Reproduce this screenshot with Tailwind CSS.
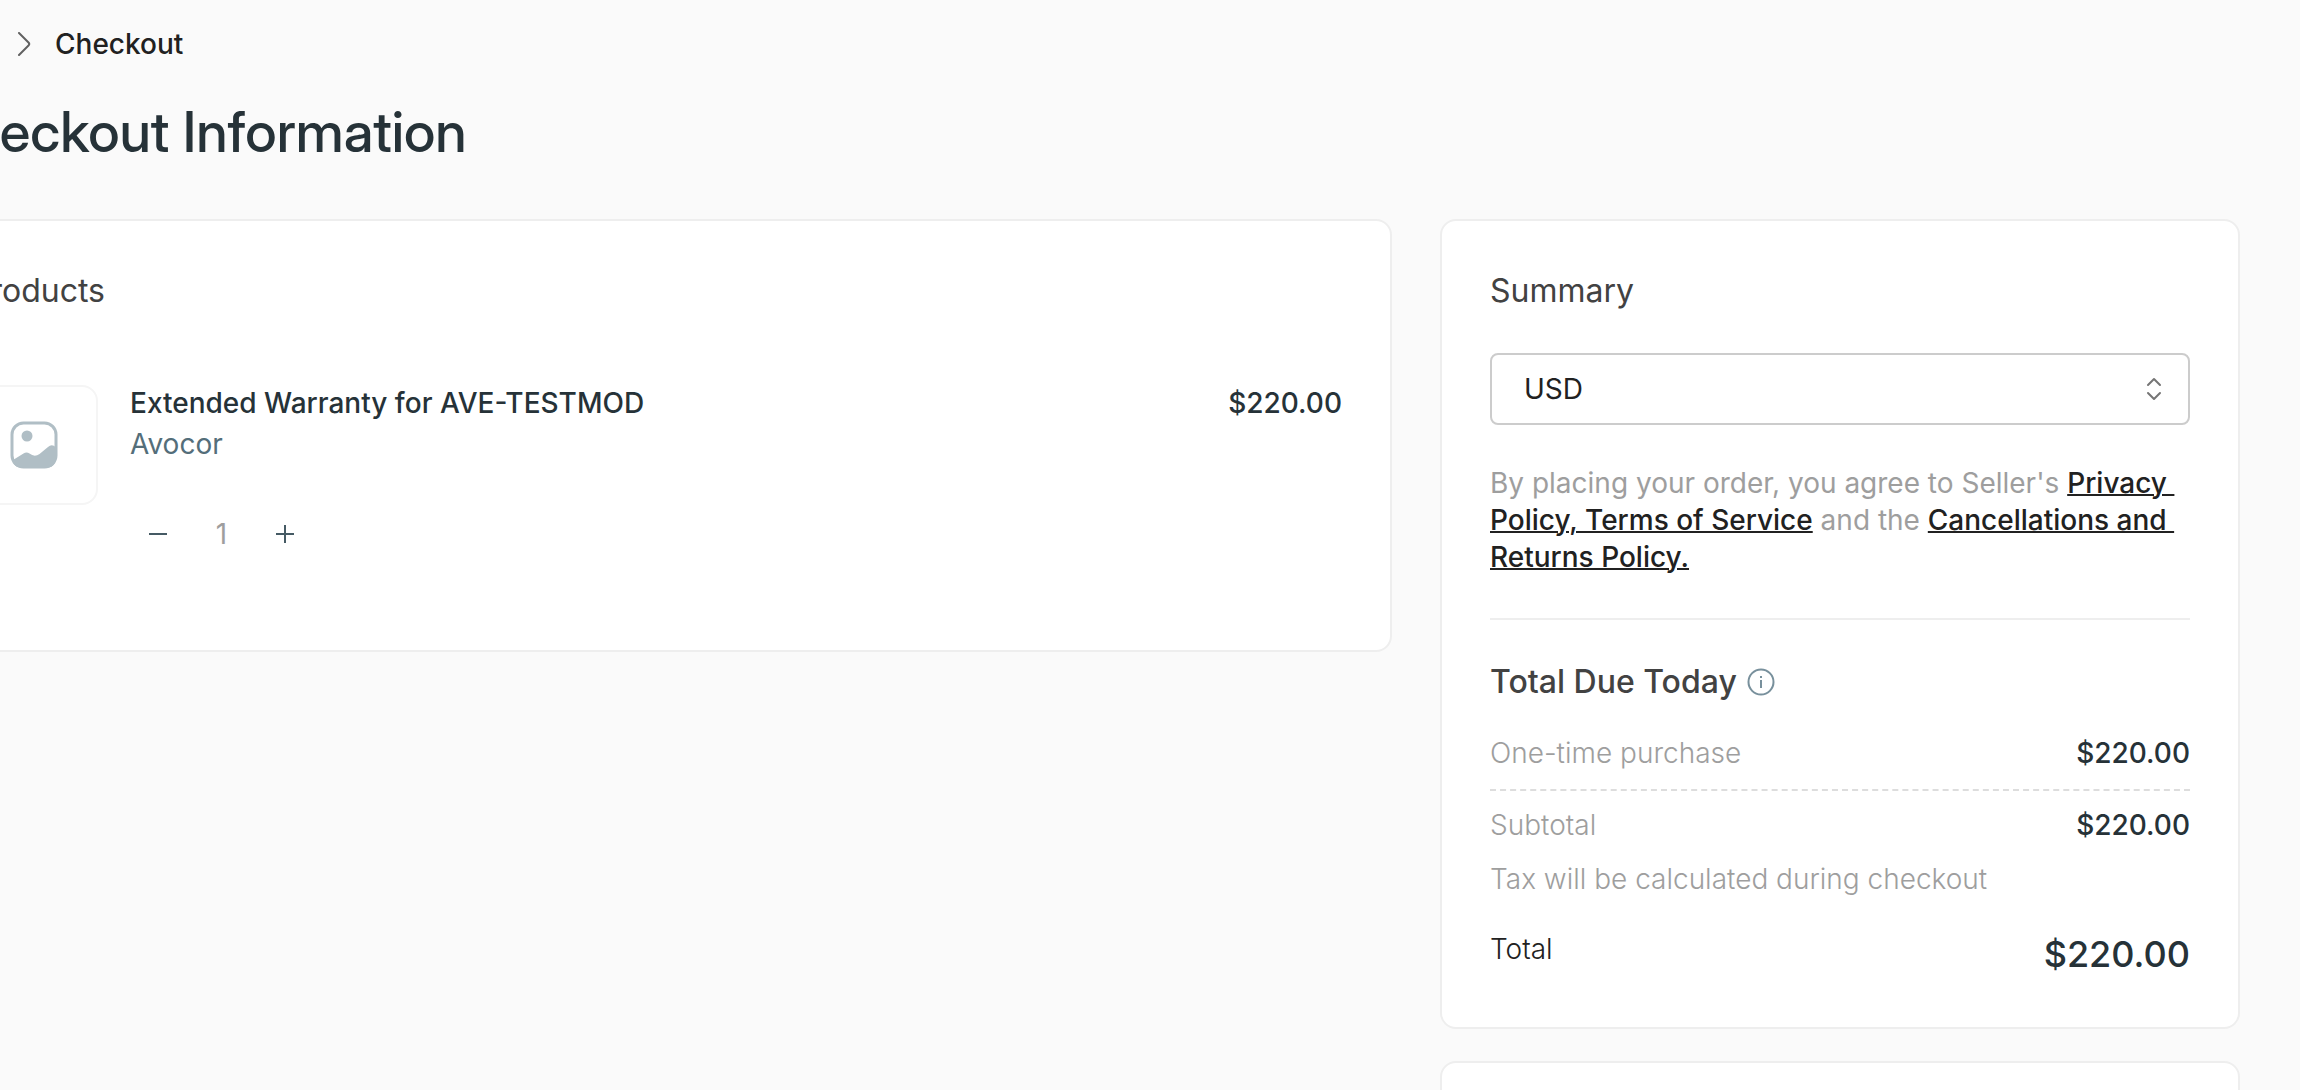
<!DOCTYPE html>
<html lang="en">
<head>
<meta charset="utf-8">
<meta name="viewport" content="width=device-width, initial-scale=1">
<title>Checkout</title>
<script src="https://cdn.jsdelivr.net/npm/@tailwindcss/browser@4"></script>
</head>
<body class="h-screen overflow-hidden bg-[#fafafa] font-['Inter',sans-serif] text-[28px] leading-10 text-[#263238]">
<div class="-ml-20 pt-6 pr-[60px]">
  <nav aria-label="Breadcrumb" class="flex items-center gap-6 pl-24 font-medium text-[#212121]">
    <svg class="h-6 w-[15px]" viewBox="0 0 15 24" fill="none" stroke="#616161" stroke-width="2" stroke-linecap="round" stroke-linejoin="round" aria-hidden="true"><path d="M3 1l9.500 9.500q1.500 1.500 0 3L3 23"/></svg>
    <span aria-current="page">Checkout</span>
  </nav>
  <h1 class="mt-8 mb-[50px] pl-2 font-['Inter_Display','Inter',sans-serif] text-[56px] leading-[73px] font-medium">Checkout Information</h1>

  <main class="grid grid-cols-[184fr_100fr] items-start gap-12">
    <section class="rounded-2xl border-2 border-[#eeeeee] bg-white p-12">
      <h2 class="text-[32px] leading-[44px] text-[#424242]">Products</h2>
      <article class="mt-[70px] flex items-start gap-8 pb-10">
        <div class="mt-0.5 flex h-[120px] w-32 shrink-0 items-center justify-center rounded-2xl border-2 border-[#f5f5f5]">
          <svg class="size-12" viewBox="0 0 48 48" fill="none" aria-hidden="true">
            <rect x="2" y="2" width="44" height="44" rx="11.500" stroke="#b0bec5" stroke-width="3"/>
            <circle cx="17" cy="15" r="5.500" fill="#b0bec5"/>
            <path d="M3 39l10.500-6.500q3-2 6 0 5 4 10 .5L38 26q4-3.500 8 .5V36q0 11-11 11H14Q3 47 3 39z" fill="#b0bec5"/>
          </svg>
        </div>
        <div class="flex grow flex-col gap-px">
          <h3 class="font-medium">Extended Warranty for AVE-TESTMOD</h3>
          <p class="text-[#546e7a]">Avocor</p>
          <div class="mt-[41px] flex h-14 items-center text-[#455a64]">
            <button type="button" aria-label="Decrease quantity" class="flex size-14 items-center justify-center">
              <svg class="size-5" viewBox="0 0 20 20" stroke="currentColor" stroke-width="2" aria-hidden="true"><path d="M1 10h18"/></svg>
            </button>
            <input type="text" aria-label="Quantity" value="1" class="w-[71px] bg-transparent text-center text-[#9e9e9e]">
            <button type="button" aria-label="Increase quantity" class="flex size-14 items-center justify-center">
              <svg class="size-5" viewBox="0 0 20 20" stroke="currentColor" stroke-width="2" aria-hidden="true"><path d="M1 10h18M10 1v18"/></svg>
            </button>
          </div>
        </div>
        <p class="font-medium">$220.00</p>
      </article>
    </section>

    <aside class="flex flex-col gap-8">
      <section class="rounded-2xl border-2 border-[#eeeeee] bg-white p-12">
        <h2 class="text-[32px] leading-[44px] text-[#424242]">Summary</h2>
        <div class="relative mt-10">
          <select aria-label="Currency" class="h-[72px] w-full appearance-none rounded-lg border-2 border-[#cccccc] bg-white px-8 text-[#212121]"><option>USD</option></select>
          <svg class="pointer-events-none absolute top-6 right-6 size-6" viewBox="0 0 24 24" fill="none" stroke="#757575" stroke-width="2" stroke-linecap="round" stroke-linejoin="round" aria-hidden="true"><path d="M6 8l6-6 6 6M6 16l6 6 6-6"/></svg>
        </div>
        <p class="mt-10 leading-[37px] text-[#9e9e9e]">By placing your order, you agree to Seller's <a href="#" class="font-medium text-[#212121] underline decoration-2">Privacy&nbsp;<wbr>Policy, Terms of Service</a> and the <a href="#" class="font-medium text-[#212121] underline decoration-2">Cancellations and&nbsp;<wbr>Returns Policy.</a></p>
        <hr class="mt-[42px] mb-10 border-t-2 border-[#eeeeee]">
        <h3 class="flex items-center gap-2.5 text-[32px] leading-[44px] font-medium text-[#424242]">Total Due Today
          <svg class="size-7" viewBox="0 0 28 28" fill="none" stroke="#78909c" stroke-width="2" aria-hidden="true"><circle cx="14" cy="14" r="12.500"/><path d="M14 12v8M14 8v2"/></svg>
        </h3>
        <dl class="mt-[29px]">
          <div class="flex justify-between border-b-2 border-dashed border-[#dddddd] pb-4"><dt class="font-light text-[#9e9e9e]">One-time purchase</dt><dd class="font-medium">$220.00</dd></div>
          <div class="flex justify-between pt-3.5"><dt class="font-light text-[#9e9e9e]">Subtotal</dt><dd class="font-medium">$220.00</dd></div>
          <div class="mt-3.5 font-light text-[#9e9e9e]"><dt>Tax will be calculated during checkout</dt></div>
          <div class="mt-[30px] flex items-start justify-between"><dt class="font-light text-[#212121]">Total</dt><dd class="text-[36px] leading-[50px] font-medium">$220.00</dd></div>
        </dl>
      </section>
      <section class="h-60 rounded-2xl border-2 border-[#eeeeee] bg-white p-12"></section>
    </aside>
  </main>
</div>
</body>
</html>
